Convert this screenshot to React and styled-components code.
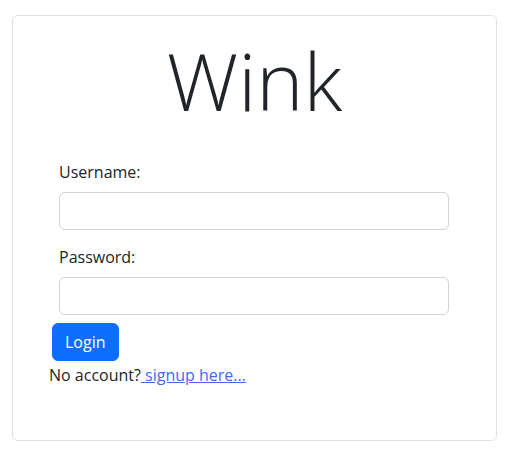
import React from 'react';
import styled, { createGlobalStyle } from 'styled-components';

const GlobalStyle = createGlobalStyle`
  body {
    margin: 0;
    font-family: "Open Sans", "Liberation Sans", sans-serif;
    font-size: 16px;
    line-height: 1.5;
    color: #212529;
    background: #fff;
  }
`;

const Page = styled.div`
  padding: 15px 21px 14px 12px;
`;

const Card = styled.div`
  border: 1px solid #dee2e6;
  border-radius: 6px;
  padding: 16px 0 53px 36px;
`;

const Title = styled.h1`
  margin: 0 36px 32px 0;
  font-size: 80px;
  font-weight: 300;
  line-height: 1.2;
  text-align: center;
`;

const Form = styled.form`
  display: flex;
  flex-direction: column;
  align-items: flex-start;
`;

const Field = styled.div`
  display: flex;
  flex-direction: column;
  margin: 0 0 15px 10px;
  width: 390px;
`;

const Label = styled.label`
  margin-bottom: 8px;
`;

const Input = styled.input`
  height: 38px;
  box-sizing: border-box;
  border: 1px solid #ced4da;
  border-radius: 6px;
  padding: 6px 12px;
  font: inherit;
`;

const Button = styled.button`
  margin: -7px 0 0 3px;
  height: 38px;
  padding: 6px 12px;
  border: 1px solid #0d6efd;
  border-radius: 6px;
  background: #0d6efd;
  color: #fff;
  font: inherit;
`;

const Signup = styled.p`
  margin: 2px 0 0;
`;

const Link = styled.a`
  color: #4468f4;
  text-decoration: underline;
`;

export default function App() {
  return (
    <>
      <GlobalStyle />
      <Page>
        <Card>
          <Title>Wink</Title>
          <Form onSubmit={(e) => e.preventDefault()}>
            <Field>
              <Label htmlFor="username">Username:</Label>
              <Input id="username" type="text" />
            </Field>
            <Field>
              <Label htmlFor="password">Password:</Label>
              <Input id="password" type="password" />
            </Field>
            <Button type="submit">Login</Button>
            <Signup>
              No account?<Link href="#"> signup here...</Link>
            </Signup>
          </Form>
        </Card>
      </Page>
    </>
  );
}
